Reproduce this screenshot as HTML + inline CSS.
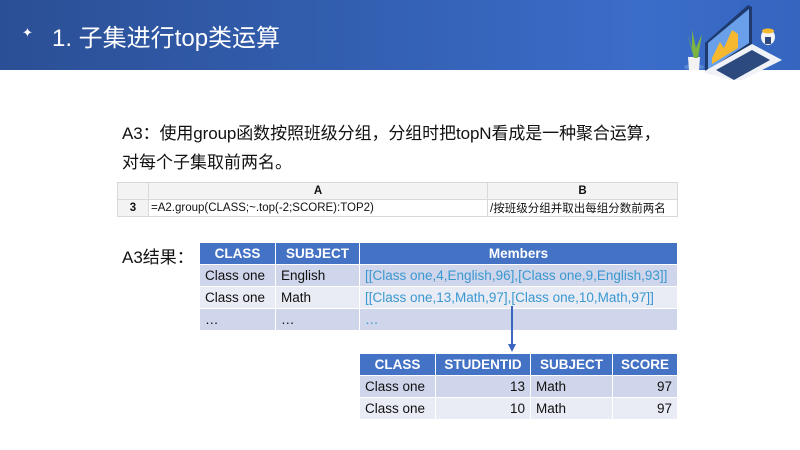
<!DOCTYPE html>
<html><head><meta charset="utf-8"><style>
*{margin:0;padding:0;box-sizing:border-box}
body{width:800px;height:450px;position:relative;background:#fff;font-family:"Liberation Sans","Noto Sans CJK SC",sans-serif;overflow:hidden}
.hdr{position:absolute;left:0;top:0;width:800px;height:70px;background:linear-gradient(90deg,#2b4f95 0%,#3563b8 55%,#3a6cc9 80%,#3466c0 100%)}
.title{position:absolute;left:52px;top:18px;color:#fff;font-size:24px;white-space:nowrap}
.star{position:absolute;left:22px;top:25px;color:#fff;font-size:13px}
.t{position:absolute;left:122px;color:#111;font-size:17px;white-space:nowrap}
table{position:absolute;border-collapse:collapse;font-size:13px}
td{white-space:nowrap;overflow:hidden}
.g td{border:1px solid #d8d8d8;height:17px;font-size:11.5px;padding:0 2px;color:#111}
.g tr:first-child td{background:#f3f3f3;font-weight:bold;text-align:center}
.g td:first-child{background:#f3f3f3;font-weight:bold;text-align:center}
.b td{height:22px;border:1px solid #fff;padding:0 5px;color:#111;font-size:13.5px}
.b tr.h td{background:#4472c4;color:#fff;font-weight:bold;text-align:center}
.b tr.r1 td{background:#cfd5ea}
.b tr.r2 td{background:#e9ebf5}
.lk{color:#3a98d0!important}
.rt{text-align:right}
</style></head><body>
<div class="hdr"></div>
<div class="star">✦</div>
<div class="title">1. 子集进行top类运算</div>
<svg style="position:absolute;left:660px;top:0" width="140" height="80" viewBox="660 0 140 80">
<ellipse cx="694" cy="67" rx="10" ry="3" fill="#5b86d4"/>
<path d="M688 57 L700 57 L699 70 L689 70Z" fill="#f2f2f2"/>
<path d="M694 58 L687 33 L692 48 L692 30 L696 48 L702 34 L698 58Z" fill="#7cb342"/>
<path d="M705 43 L748 5 L752 7 L752 45 L710 74 L705 72Z" fill="#1e3a6e"/>
<path d="M708 43 L749 9 L749 43 L708 70Z" fill="#6aa0ea"/>
<path d="M712 58 L720 42 L724 48 L732 30 L738 34 L738 48 L712 64Z" fill="#f5b82e"/>
<path d="M703 72 L752 44 L782 60 L738 82Z" fill="#f0f2f8"/>
<path d="M716 70 L752 50 L770 60 L734 80Z" fill="#2c4a7e"/>
<ellipse cx="768" cy="37" rx="7" ry="8" fill="#f4f4f4"/>
<ellipse cx="768" cy="31" rx="6" ry="2.5" fill="#f5b82e"/>
<rect x="765" y="37" width="6" height="7" fill="#2c4a7e"/>
</svg>
<div class="t" style="top:119px;letter-spacing:-0.1px">A3：使用group函数按照班级分组，分组时把topN看成是一种聚合运算，</div>
<div class="t" style="top:148px">对每个子集取前两名。</div>
<table class="g" style="left:117px;top:182px;width:561px">
<tr><td style="width:31px"></td><td style="width:339px">A</td><td>B</td></tr>
<tr><td>3</td><td style="text-align:left;font-weight:normal;background:#fff">=A2.group(CLASS;~.top(-2;SCORE):TOP2)</td><td style="text-align:left;font-weight:normal;background:#fff">/按班级分组并取出每组分数前两名</td></tr>
</table>
<div class="t" style="top:243px">A3结果：</div>
<table class="b" style="left:199px;top:242px;width:479px">
<tr class="h"><td style="width:76px">CLASS</td><td style="width:84px">SUBJECT</td><td>Members</td></tr>
<tr class="r1"><td>Class one</td><td>English</td><td class="lk">[[Class one,4,English,96],[Class one,9,English,93]]</td></tr>
<tr class="r2"><td>Class one</td><td>Math</td><td class="lk">[[Class one,13,Math,97],[Class one,10,Math,97]]</td></tr>
<tr class="r1"><td>…</td><td>…</td><td class="lk">…</td></tr>
</table>
<div style="position:absolute;left:511px;top:306px;width:2px;height:40px;background:#3a66c0"></div>
<div style="position:absolute;left:508px;top:344px;width:0;height:0;border-left:4px solid transparent;border-right:4px solid transparent;border-top:8px solid #3a66c0"></div>
<table class="b" style="left:359px;top:353px;width:319px">
<tr class="h"><td style="width:76px">CLASS</td><td style="width:95px">STUDENTID</td><td style="width:82px">SUBJECT</td><td>SCORE</td></tr>
<tr class="r1"><td>Class one</td><td class="rt">13</td><td>Math</td><td class="rt">97</td></tr>
<tr class="r2"><td>Class one</td><td class="rt">10</td><td>Math</td><td class="rt">97</td></tr>
</table>
</body></html>
